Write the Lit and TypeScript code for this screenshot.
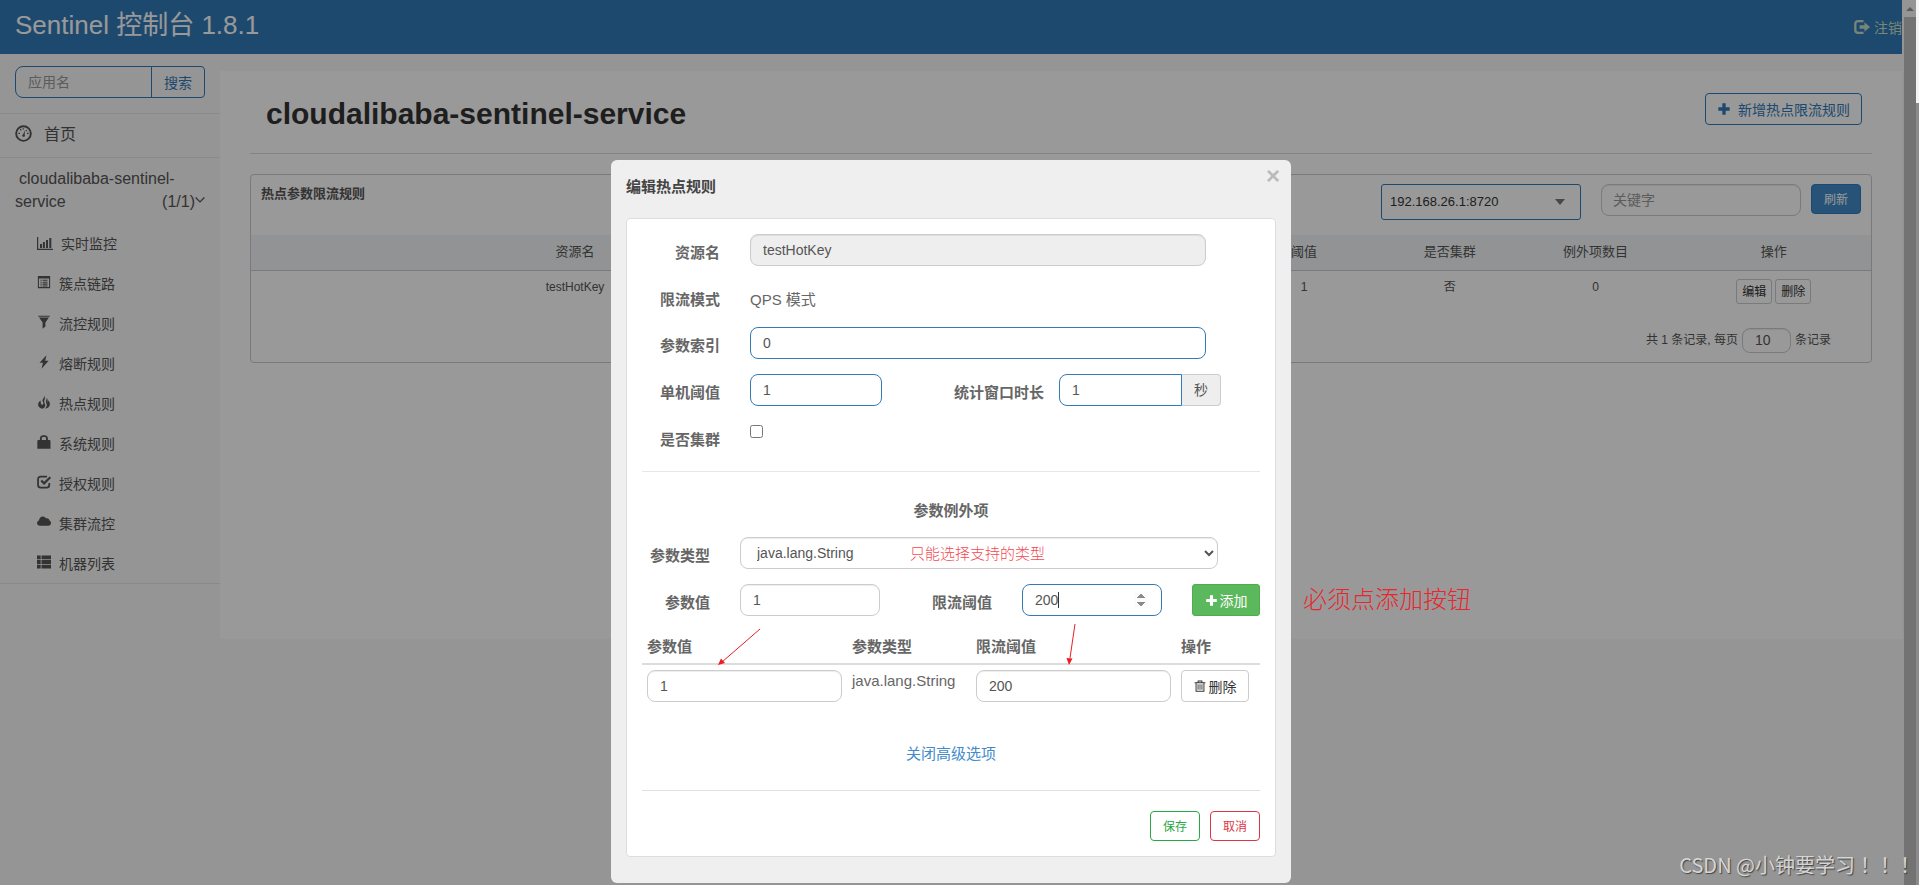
import { LitElement, html, css, svg } from "lit";
import { customElement, property, state } from "lit/decorators.js";

const glyphs: Record<string, unknown> = {
  dashboard: svg`<circle cx="8" cy="8" r="6.9" fill="none" stroke="currentColor" stroke-width="1.8"/><path d="M7 10.6 9.4 4.6 8.900 11z"/><circle cx="8" cy="9.8" r="1.1"/><path d="M3.2 7.2h1.5v1.2H3.2zM11.3 7.2h1.5v1.2h-1.5zM4.6 4.3l.9-.7.8 1-.9.7zM7.2 3h1.2v1.3H7.2zM10.6 4.4l.9.8-.9.9-.8-.8z"/>`,
  stats: svg`<path d="M0 2h1.200v11.800H16V15H0zM3 9h2v4H3zM5.900 7h2v6h-2zM9 5h2v8H9zM12.300 3h2v10h-2z"/>`,
  list: svg`<path fill-rule="evenodd" d="M1 1h14v14H1zM2.200 4v9.800h11.600V4z"/><path d="M4 5.400h1.300v1.200H4zM6.400 5.400H12v1.200H6.400zM4 7.600h1.300v1.200H4zM6.400 7.600H12v1.200H6.400zM4 9.800h1.300V11H4zM6.400 9.800H12V11H6.400zM4 11.900h1.300V13H4zM6.400 11.900H12V13H6.400z"/>`,
  filter: svg`<path d="M1.500.800h13v1.300h-13zM2.400 2.900h11.200L9.600 8.600V13L6.400 15.600v-7z"/>`,
  flash: svg`<path d="M10.800.400 2.900 8.900h3.900L5.200 15.800 13.300 6.700H9.400z"/>`,
  fire: svg`<path d="M8.400.2c.7 2.700-2.300 3.900-2.100 6.500.1 1 .9 1.600 1 2.600.1 1.200-.9 2.100-1.900 1.700-1.300-.5-1-2.500-1.400-4.600C2 8 .900 9.800 1.400 12c.5 2 2.200 3.200 4.600 3.700 2-.4 3.400-1.800 3.400-3.900 0-1.700-1.200-2.600-1.200-4.300 0-2.200 1.900-3.500.2-7.300z"/><path d="M10.900 3c.6 2.400-.9 3-.7 5 .2 1.200 1.100 2 1 3.700-.1 1.500-.9 2.700-2 3.700 2.900-.3 5.100-1.900 5.500-4.400.3-2.200-.9-3.700-2-4.900.2 1.300-.1 2.200-.7 2.600.6-2.200.3-4.300-1.100-5.700z"/>`,
  lock: svg`<path fill-rule="evenodd" d="M.4 7c0-.8.5-1.300 1.300-1.300h1.600V3.900C3.300 1.600 4.900.200 7.200.200h1.400c2.300 0 3.900 1.400 3.900 3.700v1.800h1.600c.8 0 1.300.500 1.300 1.300v8.800H.4zM5.500 5.700h4.800V3.900c0-1-.6-1.600-1.700-1.600H7.200c-1.100 0-1.700.6-1.700 1.600z"/>`,
  check: svg`<path d="M11.400 1.900H4.200C2.300 1.900 1.200 3 1.200 4.800v6.600c0 1.900 1.100 3 3 3h6.800c1.900 0 3-1.100 3-3V9.200" fill="none" stroke="currentColor" stroke-width="2"/><path d="M4.900 6.300 8.100 9.600 15.300 2.500" fill="none" stroke="currentColor" stroke-width="2.500"/>`,
  cloud: svg`<path d="M3.600 12.300C1.500 12.300 0 11 0 9.200 0 7.800 1 6.600 2.300 6.300 2.300 3.600 4.200 1.600 6.500 1.600c1.700 0 3 .8 3.700 2.200 2.200-.7 4 .7 4.200 2.700 1 .4 1.600 1.400 1.600 2.600 0 1.900-1.300 3.200-3.200 3.200z"/>`,
  thlist: svg`<path d="M0 .500h4.200v4.300H0zM5.200.500H16v4.300H5.200zM0 5.800h4.200v4.400H0zM5.200 5.800H16v4.400H5.200zM0 11.200h4.200v4.300H0zM5.200 11.200H16v4.300H5.200z"/>`,
  logout: svg`<path d="M9.500 2.100H4.200C2.300 2.100 1.300 3.100 1.300 5v6c0 1.900 1 2.900 2.900 2.900h5.300" fill="none" stroke="currentColor" stroke-width="2.300"/><path d="M10.500 3.200 16 8l-5.500 4.800v-3H5.600V6.200h4.900z"/>`,
  plus: svg`<path d="M6.100 1.500h3.800v4.600h4.600v3.800H9.900v4.600H6.100V9.900H1.500V6.100h4.600z"/>`,
  trash: svg`<path fill-rule="evenodd" d="M4.800 3V.800h6.400V3H15.200v1.300h-1.300v11.200H2.100V4.300H.8V3zm1.300 0h3.800v-.9H6.100zM3.400 4.300v9.900h9.200V4.300z"/><path d="M4.800 5.700H6v7.200H4.800zM7.400 5.700h1.200v7.200H7.400zM10 5.700h1.200v7.200H10z"/>`,
  chevron: svg`<path d="M1 4 8 11 15 4" fill="none" stroke="currentColor" stroke-width="2"/>`,
};

@customElement("g-icon")
class GIcon extends LitElement {
  @property() name = "plus";
  static styles = css`
    :host { display: inline-flex; width: 14px; height: 14px; flex: none; }
    .glyph { width: 100%; height: 100%; fill: currentColor; }
  `;
  render() {
    return html`<svg class="glyph" viewBox="0 0 16 16" aria-hidden="true">${glyphs[this.name]}</svg>`;
  }
}

const shared = css`
  * { box-sizing: border-box; }
  a { color: inherit; text-decoration: none; }
  h1, h2, h3, p { margin: 0; }
  input, select, button { font-family: inherit; color: inherit; margin: 0; }
  button { display: inline-flex; align-items: center; justify-content: center; cursor: pointer; }
  .field {
    display: block; width: 100%; height: 32px; padding: 0 12px; font-size: 14px;
    border: 1px solid #ccc; border-radius: 8px; background: #fff; color: #555;
    box-shadow: inset 0 1px 1px rgba(0, 0, 0, .075); outline: 0;
  }
  .field::placeholder { color: #999; opacity: 1; }
  .primary { border-color: #337ab7; box-shadow: none; }
`;

@customElement("side-nav")
class SideNav extends LitElement {
  @state() private items = [
    ["stats", "实时监控"], ["list", "簇点链路"], ["filter", "流控规则"],
    ["flash", "熔断规则"], ["fire", "热点规则"], ["lock", "系统规则"],
    ["check", "授权规则"], ["cloud", "集群流控"], ["thlist", "机器列表"],
  ];
  static styles = [shared, css`
    :host { display: block; color: #555; }
    .search { display: flex; padding: 12px 15px 15px; border-bottom: 1px solid #e7e7e7; }
    .search .field { flex: 1; min-width: 0; border-radius: 8px 0 0 8px; background: transparent; }
    .search button {
      width: 54px; margin-left: -1px; font-size: 14px; color: #337ab7; background: transparent;
      border: 1px solid #337ab7; border-radius: 0 4px 4px 0; padding: 0;
    }
    .home { display: flex; align-items: center; gap: 12px; height: 44px; padding: 0 15px 5px; font-size: 16px; border-bottom: 1px solid #e7e7e7; }
    .home g-icon { width: 17px; height: 17px; }
    .app { display: flow-root; padding: 9px 15px 10px; font-size: 16px; line-height: 23px; text-indent: 4px; }
    .count { float: right; display: flex; align-items: center; text-indent: 0; }
    .count g-icon { width: 10px; height: 10px; margin-bottom: 4px; }
    .items { list-style: none; margin: 0; padding: 0; border-bottom: 1px solid #e7e7e7; }
    .item { display: flex; align-items: center; gap: 8px; height: 40px; padding-left: 37px; font-size: 14px; }
    .items g-icon { margin-bottom: 2px; }
    li:first-child g-icon { width: 16px; height: 16px; margin-bottom: 0; }
  `];
  render() {
    return html`
      <form class="search">
        <input class="field primary" type="text" placeholder="应用名" aria-label="应用名">
        <button type="button">搜索</button>
      </form>
      <a class="home" href="#"><g-icon name="dashboard"></g-icon><span>首页</span></a>
      <a class="app" href="#">cloudalibaba-sentinel-service<span class="count">(1/1)<g-icon name="chevron"></g-icon></span></a>
      <ul class="items">
        ${this.items.map(([icon, text]) => html`<li><a class="item" href="#"><g-icon name=${icon}></g-icon>${text}</a></li>`)}
      </ul>`;
  }
}

@customElement("rule-list")
class RuleList extends LitElement {
  static styles = [shared, css`
    :host { display: block; min-height: 568px; padding: 0 30px; background: #fff; color: #555; }
    .head { display: flex; align-items: center; justify-content: space-between; height: 83px; padding: 4px 10px 0 16px; border-bottom: 1px solid #ddd; }
    .head h1 { font-size: 30px; font-weight: 700; color: #333; }
    .create { gap: 7px; height: 32px; padding: 0 11px; margin-bottom: 10px; font-size: 14px; color: #337ab7; border: 1px solid #337ab7; border-radius: 4px; background: transparent; }
    .card { margin-top: 20px; border: 1px solid #ccc; border-radius: 4px; }
    .bar { display: flex; align-items: flex-start; height: 60px; padding: 9px 10px; }
    .bar h2 { flex: 1; font-size: 13px; line-height: 20px; font-weight: 700; }
    .machine { position: relative; width: 200px; margin-right: 20px; }
    .machine select { appearance: none; width: 100%; height: 36px; padding: 0 8px 2px; font-size: 13px; color: #333; border: 1px solid #337ab7; border-radius: 3px; background: transparent; }
    .caret { position: absolute; right: 16px; top: 15px; border: 5px solid transparent; border-top: 6px solid #777; border-bottom: 0; }
    .keyword { width: 200px; margin-right: 10px; padding: 0 11px; }
    .refresh { width: 50px; height: 30px; padding: 0 0 2px; font-size: 12px; color: #fff; border: 1px solid #337ab7; border-radius: 4px; background: #428bca; }
    .rules { width: 100%; border-collapse: collapse; table-layout: fixed; font-size: 12px; text-align: center; }
    .rules th { height: 35px; padding: 0 0 4px; font-size: 13px; font-weight: 400; background: #f3f5f7; border-bottom: 1px solid #ccc; }
    .rules td { padding: 8px 0; vertical-align: top; line-height: 16px; }
    .w40 { width: 40%; } .w10 { width: 10.25%; } .w9 { width: 9%; }
    .rules .ops { padding-left: 8px; }
    .ops div { display: flex; justify-content: center; gap: 3px; }
    .ops button { width: 36px; height: 25px; padding: 0 0 2px; font-size: 12px; color: #333; border: 1px solid #ccc; border-radius: 3px; background: #fff; }
    .pager { display: flex; align-items: center; justify-content: flex-end; gap: 4px; padding: 16px 40px 9px 0; font-size: 12px; }
    .pager span { padding-bottom: 3px; }
    .pager .field { width: 49px; height: 25px; }
  `];
  render() {
    return html`
      <header class="head">
        <h1>cloudalibaba-sentinel-service</h1>
        <button class="create"><g-icon name="plus"></g-icon>新增热点限流规则</button>
      </header>
      <section class="card">
        <div class="bar">
          <h2>热点参数限流规则</h2>
          <div class="machine">
            <select aria-label="机器"><option>192.168.26.1:8720</option></select>
            <span class="caret"></span>
          </div>
          <input class="field keyword" type="text" placeholder="关键字" aria-label="关键字">
          <button class="refresh">刷新</button>
        </div>
        <table class="rules">
          <thead><tr>
            <th class="w40">资源名</th><th class="w10">参数索引</th><th class="w10">流控模式</th>
            <th class="w9">阈值</th><th class="w9">是否集群</th><th class="w9">例外项数目</th><th class="ops">操作</th>
          </tr></thead>
          <tbody><tr>
            <td>testHotKey</td><td>0</td><td>QPS</td><td>1</td><td>否</td><td>0</td>
            <td class="ops"><div><button>编辑</button><button>删除</button></div></td>
          </tr></tbody>
        </table>
        <div class="pager">
          <span>共 1 条记录, 每页</span>
          <input class="field" type="text" .value=${"10"} aria-label="每页条数">
          <span>条记录</span>
        </div>
      </section>`;
  }
}

@customElement("rule-dialog")
class RuleDialog extends LitElement {
  static styles = [shared, css`
    :host { display: block; position: relative; width: 680px; padding: 0 15px 26px; border-radius: 6px; background: #efefef; color: #555; font-size: 15px; }
    .title { height: 58px; padding-top: 16px; font-size: 15px; line-height: 22px; color: #444; font-weight: 700; }
    .close { position: absolute; right: 8px; top: 6px; width: 20px; height: 20px; padding: 0; border: 0; background: none; font-size: 24px; font-weight: 700; color: #bbb; }
    .panel { border: 1px solid #ddd; border-radius: 4px; background: #fff; padding: 15px 0; }
    .form { display: grid; grid-template-columns: repeat(12, 1fr); grid-auto-rows: minmax(31px, auto); row-gap: 15px; }
    .label { grid-column: span 2; padding: 8px 15px 0 0; line-height: 22px; text-align: right; font-weight: 700; color: #666; }
    .c3 { grid-column: span 3; padding: 0 15px; }
    .c9 { grid-column: span 9; padding: 0 15px; }
    .pad { grid-column: span 1; }
    .label.wide { grid-column: span 3; }
    .plain { padding-top: 8px; line-height: 22px; color: #666; }
    .tick { padding-top: 4px; line-height: 1; }
    .tick input { width: 13px; height: 13px; }
    .readonly { background: #eee; }
    .unit { grid-column: span 3; display: flex; }
    .unit .field { flex: 1; min-width: 0; border-radius: 8px 0 0 8px; }
    .unit span { width: 39px; line-height: 30px; text-align: center; font-size: 14px; background: #eee; border: 1px solid #ccc; border-left: 0; border-radius: 0 4px 4px 0; }
    .rule { border: 0; border-top: 1px solid #e7e7e7; margin: 19px 15px 0; }
    .sub { padding: 28px 0 15px; line-height: 22px; font-size: 15px; text-align: center; font-weight: 700; color: #666; }
    .extra { position: relative; }
    .row { display: grid; margin-bottom: 15px; }
    .one { grid-template-columns: 98fr 508fr 42fr; }
    .two { grid-template-columns: 98fr 170fr 112fr 170fr 98fr; }
    .row .label { grid-column: auto; }
    .cell { position: relative; padding: 0 15px; }
    .note { position: absolute; left: 185px; top: 6px; font-size: 15px; line-height: 22px; font-weight: 300; color: #f24a52; pointer-events: none; }
    .num::-webkit-inner-spin-button { opacity: 1; height: 16px; }
    .cursor { position: absolute; left: 51px; top: 8px; width: 1px; height: 16px; background: #333; }
    .add { width: 100%; height: 32px; gap: 2px; padding: 0; font-size: 14px; color: #fff; border: 1px solid #4cae4c; border-radius: 3px; background: #5cb85c; white-space: nowrap; }
    .list { width: calc(100% - 30px); margin: 0 15px; border-collapse: collapse; table-layout: fixed; }
    .list th { height: 33px; padding: 0 5px 4px; text-align: left; border-bottom: 2px solid #ddd; font-weight: 700; color: #666; }
    .list td { padding: 5px; vertical-align: top; line-height: 22px; color: #666; }
    .v { width: 205px; } .t { width: 124px; }
    .del { width: 68px; height: 32px; gap: 3px; padding: 0; font-size: 14px; color: #333; border: 1px solid #ccc; border-radius: 4px; background: #fff; }
    .del g-icon { width: 12px; height: 12px; }
    .add g-icon { width: 13px; height: 13px; }
    .arrows { position: absolute; left: 15px; top: 75px; width: 618px; height: 50px; pointer-events: none; overflow: visible; }
    .toggle { display: block; margin-top: 36px; text-align: center; line-height: 22px; color: #428bca; }
    .foot { display: flex; justify-content: flex-end; gap: 10px; margin: 25px 15px 0; padding-top: 20px; border-top: 1px solid #e0e0e0; }
    .foot button { width: 50px; height: 30px; padding: 0 0 2px; font-size: 12px; border: 1px solid; border-radius: 4px; background: #fff; }
    .save { color: #28a745; } .foot .cancel { color: #dc3545; }
  `];
  render() {
    return html`
      <h2 class="title">编辑热点规则</h2>
      <button class="close" aria-label="关闭">×</button>
      <div class="panel">
        <div class="form">
          <label class="label" for="res">资源名</label>
          <div class="c9"><input id="res" class="field readonly" type="text" readonly .value=${"testHotKey"}></div><i class="pad"></i>
          <span class="label">限流模式</span>
          <div class="c9 plain">QPS 模式</div><i class="pad"></i>
          <label class="label" for="idx">参数索引</label>
          <div class="c9"><input id="idx" class="field primary" type="text" .value=${"0"}></div><i class="pad"></i>
          <label class="label" for="thr">单机阈值</label>
          <div class="c3"><input id="thr" class="field primary" type="text" .value=${"1"}></div>
          <label class="label wide" for="win">统计窗口时长</label>
          <div class="unit"><input id="win" class="field primary" type="text" .value=${"1"}><span>秒</span></div><i class="pad"></i>
          <label class="label" for="clu">是否集群</label>
          <div class="c9 tick"><input id="clu" type="checkbox"></div>
        </div>
        <hr class="rule">
        <h3 class="sub">参数例外项</h3>
        <div class="row one">
          <label class="label" for="typ">参数类型</label>
          <div class="cell">
            <select id="typ" class="field"><option>java.lang.String</option></select>
            <span class="note">只能选择支持的类型</span>
          </div>
        </div>
        <div class="extra">
          <div class="row two">
            <label class="label" for="val">参数值</label>
            <div class="cell"><input id="val" class="field" type="text" .value=${"1"}></div>
            <label class="label" for="lim">限流阈值</label>
            <div class="cell"><input id="lim" class="field primary num" type="number" .value=${"200"}><span class="cursor"></span></div>
            <div class="cell"><button class="add"><g-icon name="plus"></g-icon>添加</button></div>
          </div>
          <table class="list">
            <thead><tr><th class="v">参数值</th><th class="t">参数类型</th><th class="v">限流阈值</th><th>操作</th></tr></thead>
            <tbody><tr>
              <td><input class="field" type="text" .value=${"1"} aria-label="参数值"></td>
              <td>java.lang.String</td>
              <td><input class="field" type="text" .value=${"200"} aria-label="限流阈值"></td>
              <td><button class="del"><g-icon name="trash"></g-icon>删除</button></td>
            </tr></tbody>
          </table>
          <svg class="arrows" viewBox="0 35 618 50" aria-hidden="true">
            <g stroke="#ed1c24" fill="#ed1c24">
              <path d="M118 5 80 38M433 0 428 34" fill="none"/>
              <path stroke="none" d="M76 41 79 34.500 83 39zM427 41 424.500 34 430.500 34.500z"/>
            </g>
          </svg>
        </div>
        <a class="toggle" href="#">关闭高级选项</a>
        <div class="foot"><button class="save">保存</button><button class="cancel">取消</button></div>
      </div>`;
  }
}

@customElement("app-root")
class AppRoot extends LitElement {
  static styles = [shared, css`
    :host { position: relative; display: grid; grid-template-columns: minmax(0, 1fr) 17px; height: 100vh; overflow: hidden; font-family: "Liberation Sans", "Noto Sans CJK SC", sans-serif; }
    .page { position: relative; overflow: hidden; background: #f8f8f8; }
    .top { display: flex; justify-content: space-between; height: 54px; padding-left: 15px; background: #337ab7; color: #fff; }
    .brand { font-size: 26px; line-height: 50px; }
    .logout { display: flex; align-items: center; gap: 4px; width: 48px; font-size: 14px; white-space: nowrap; color: #c5e0c8; }
    .logout g-icon { width: 16px; height: 16px; }
    .body { display: grid; grid-template-columns: 220px minmax(0, 1fr); align-items: start; }
    .body rule-list { margin-top: 17px; }
    .shade { position: absolute; inset: 0; display: flex; justify-content: center; align-items: flex-start; padding-top: 160px; background: rgba(0, 0, 0, .4); }
    .wrap { position: relative; }
    .hint { position: absolute; left: calc(100% + 12px); top: 424px; font-size: 24px; line-height: 32px; font-weight: 300; white-space: nowrap; color: #e8262d; }
    .mark { position: absolute; right: 4px; bottom: 6px; font-family: "Noto Sans CJK TC", sans-serif; font-size: 20px; line-height: 28px; white-space: nowrap; color: #d5d5d5; text-shadow: 1px 1px 1px #444; }
    .scroll { display: grid; grid-template-columns: 2px 12px 3px; background: #959595; }
    .track { grid-column: 2; display: flex; flex-direction: column; }
    .up { height: 17px; display: flex; align-items: center; justify-content: center; }
    .up::before { content: ""; border: 4px solid transparent; border-top: 0; border-bottom: 4px solid #5b5b5b; }
    .thumb { flex: 1; background: #737373; }
    .edge { background: linear-gradient(#f4f4f4 103px, #8b8b8b 103px); }
  `];
  render() {
    return html`
      <div class="page">
        <header class="top">
          <a class="brand" href="#">Sentinel 控制台 1.8.1</a>
          <a class="logout" href="#"><g-icon name="logout"></g-icon>注销</a>
        </header>
        <div class="body"><side-nav></side-nav><rule-list></rule-list></div>
        <div class="shade">
          <div class="wrap"><rule-dialog role="dialog" aria-label="编辑热点规则"></rule-dialog><span class="hint">必须点添加按钮</span></div>
        </div>
      </div>
      <div class="scroll" aria-hidden="true"><div class="track"><div class="up"></div><div class="thumb"></div></div><div class="edge"></div></div>
      <span class="mark">CSDN @小钟要学习！！！</span>`;
  }
}
